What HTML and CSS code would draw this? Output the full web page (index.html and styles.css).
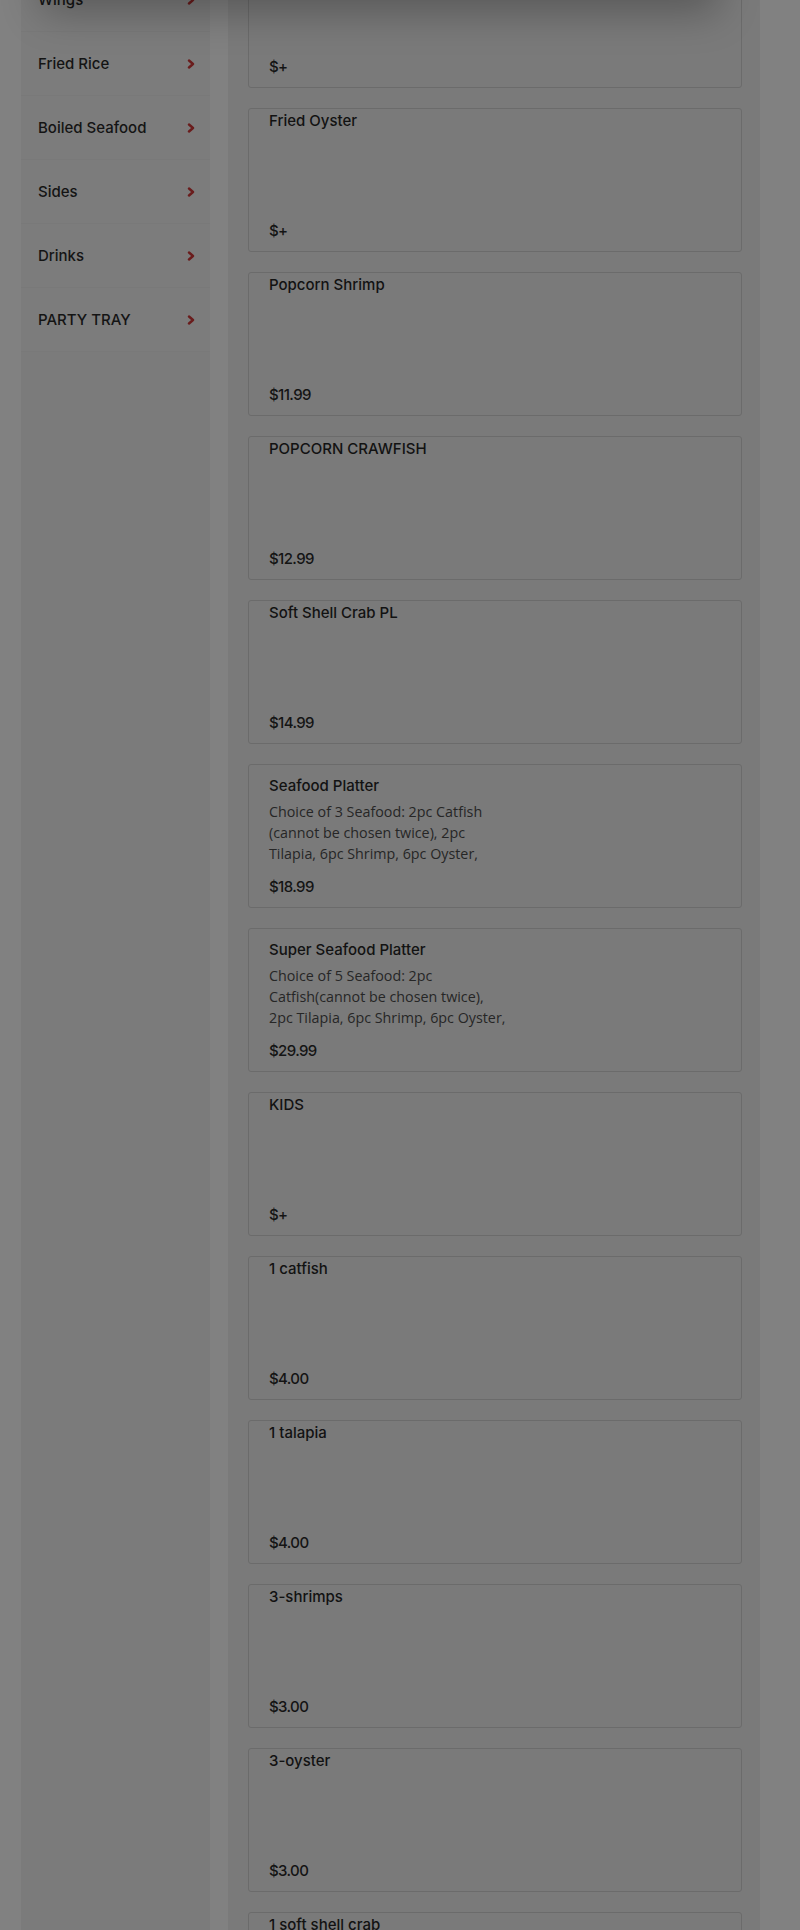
FILE: index.html
```html
<!DOCTYPE html>
<html lang="en">
<head>
<meta charset="utf-8">
<title>Menu</title>
<link rel="stylesheet" href="styles.css">
</head>
<body>
<div class="modal-shadow"></div>
<div class="page">
  <nav class="sidebar">
    <ul class="cat-list">
      <li class="cat"><span>Wings</span><svg class="chev" viewBox="0 0 8 10" width="8" height="10"><polyline points="2,1.5 6,5 2,8.5"/></svg></li>
      <li class="cat"><span>Fried Rice</span><svg class="chev" viewBox="0 0 8 10" width="8" height="10"><polyline points="2,1.5 6,5 2,8.5"/></svg></li>
      <li class="cat"><span>Boiled Seafood</span><svg class="chev" viewBox="0 0 8 10" width="8" height="10"><polyline points="2,1.5 6,5 2,8.5"/></svg></li>
      <li class="cat"><span>Sides</span><svg class="chev" viewBox="0 0 8 10" width="8" height="10"><polyline points="2,1.5 6,5 2,8.5"/></svg></li>
      <li class="cat"><span>Drinks</span><svg class="chev" viewBox="0 0 8 10" width="8" height="10"><polyline points="2,1.5 6,5 2,8.5"/></svg></li>
      <li class="cat"><span>PARTY TRAY</span><svg class="chev" viewBox="0 0 8 10" width="8" height="10"><polyline points="2,1.5 6,5 2,8.5"/></svg></li>
    </ul>
  </nav>
  <main class="menu">
    <div class="items">
      <div class="card"><div class="title">Fried Shrimp</div><div class="price">$+</div></div>
      <div class="card"><div class="title">Fried Oyster</div><div class="price">$+</div></div>
      <div class="card"><div class="title">Popcorn Shrimp</div><div class="price">$11.99</div></div>
      <div class="card"><div class="title">POPCORN CRAWFISH</div><div class="price">$12.99</div></div>
      <div class="card"><div class="title">Soft Shell Crab PL</div><div class="price">$14.99</div></div>
      <div class="card card--desc"><div class="title">Seafood Platter</div><div class="desc">Choice of 3 Seafood: 2pc Catfish (cannot be chosen twice), 2pc Tilapia, 6pc Shrimp, 6pc Oyster,</div><div class="price">$18.99</div></div>
      <div class="card card--desc"><div class="title">Super Seafood Platter</div><div class="desc">Choice of 5 Seafood: 2pc Catfish(cannot be chosen twice), 2pc Tilapia, 6pc Shrimp, 6pc Oyster,</div><div class="price">$29.99</div></div>
      <div class="card"><div class="title">KIDS</div><div class="price">$+</div></div>
      <div class="card"><div class="title">1 catfish</div><div class="price">$4.00</div></div>
      <div class="card"><div class="title">1 talapia</div><div class="price">$4.00</div></div>
      <div class="card"><div class="title">3-shrimps</div><div class="price">$3.00</div></div>
      <div class="card"><div class="title">3-oyster</div><div class="price">$3.00</div></div>
      <div class="card"><div class="title">1 soft shell crab</div><div class="price">$5.00</div></div>
    </div>
  </main>
</div>
</body>
</html>
```
FILE: styles.css
```css
html, body {
  margin: 0;
  padding: 0;
}
body {
  background: #818181;
  font-family: "Inter", "Liberation Sans", sans-serif;
  height: 1930px;
  overflow: hidden;
  position: relative;
}
.modal-shadow {
  position: absolute;
  top: -70px;
  left: 50px;
  width: 660px;
  height: 70px;
  background: #7a7a7a;
  box-shadow: 0 4px 40px 8px rgba(0, 0, 0, 0.28);
  z-index: 5;
}
.page {
  display: flex;
  gap: 18px;
  padding-left: 21px;
  align-items: stretch;
  min-height: 1930px;
}
.sidebar {
  width: 189px;
  flex: none;
  background: #7b7b7b;
}
.cat-list {
  list-style: none;
  margin: -32px 0 0;
  padding: 0;
}
.cat {
  height: 64px;
  box-sizing: border-box;
  display: flex;
  align-items: center;
  justify-content: space-between;
  padding: 0 15px 0 17px;
  background: #7c7c7c;
  border-bottom: 1px solid #797979;
  font-size: 15px;
  font-weight: 500;
  color: #141414;
}
.chev {
  fill: none;
  stroke: #6a1c1c;
  stroke-width: 2.4;
  stroke-linecap: round;
  stroke-linejoin: round;
}
.menu {
  width: 532px;
  flex: none;
  background: #7a7a7a;
  box-sizing: border-box;
  padding: 0 18px 0 20px;
}
.items {
  margin-top: -56px;
  display: flex;
  flex-direction: column;
  gap: 20px;
}
.card {
  height: 144px;
  box-sizing: border-box;
  border: 1px solid #6b6b6b;
  border-radius: 3px;
  padding: 2px 20px 10px;
  display: flex;
  flex-direction: column;
}
.card--desc {
  padding-top: 11px;
}
.title {
  font-size: 15px;
  font-weight: 500;
  line-height: 20px;
  color: #121212;
}
.desc {
  margin-top: 5px;
  width: 240px;
  font-family: "Open Sans", sans-serif;
  font-size: 14.3px;
  line-height: 21px;
  color: #262626;
}
.price {
  margin-top: auto;
  font-size: 15px;
  font-weight: 500;
  letter-spacing: -0.6px;
  line-height: 20px;
  color: #141414;
}
```
